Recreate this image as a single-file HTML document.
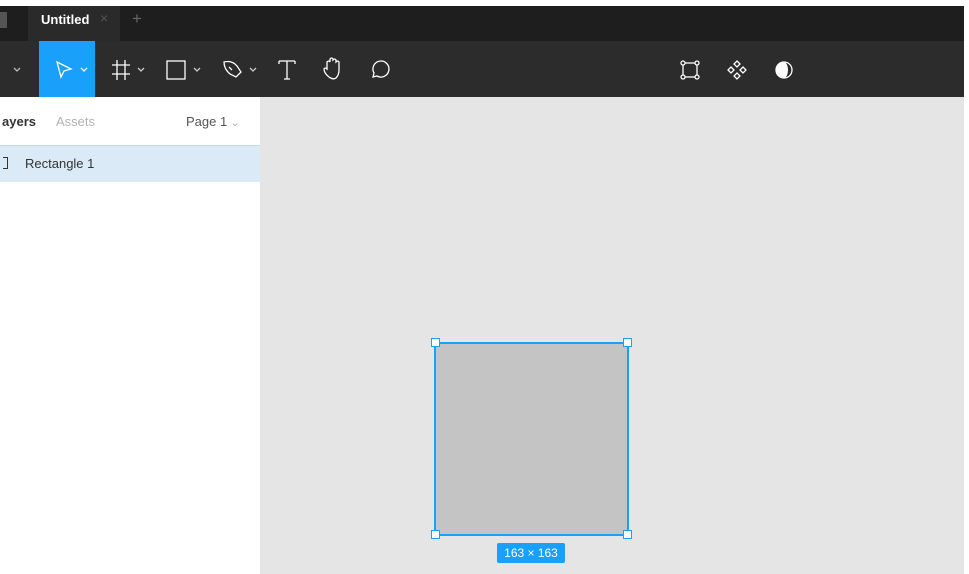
<!DOCTYPE html>
<html><head><style>
*{margin:0;padding:0;box-sizing:border-box}
body{width:969px;height:574px;background:#fff;position:relative;overflow:hidden;font-family:"Liberation Sans",sans-serif}
.abs{position:absolute}
svg{position:absolute;overflow:visible}
</style></head><body>
<div class="abs" style="left:0;top:6px;width:964px;height:35px;background:#1e1e1e"></div>
<div class="abs" style="left:0;top:12px;width:7px;height:16px;background:#555"></div>
<div class="abs" style="left:28px;top:6px;width:92px;height:35px;background:#2a2a2a"></div>
<div class="abs" style="left:41px;top:12px;color:#fff;font-size:13px;font-weight:bold">Untitled</div>
<div class="abs" style="left:100px;top:10px;color:#555;font-size:14px">×</div>
<div class="abs" style="left:132px;top:9px;color:#666;font-size:17px">+</div>
<div class="abs" style="left:0;top:41px;width:964px;height:56px;background:#2c2c2c"></div>
<div class="abs" style="left:39px;top:41px;width:56px;height:56px;background:#18a0fb"></div>
<svg width="969" height="574" style="left:0;top:0" fill="none" stroke="#fff" stroke-width="1.3">
<path d="M14 68l3 3 3-3" stroke="#bbb"/>
<path d="M57 62l14 7-7 2-3 6z"/>
<path d="M81 68l3 3 3-3"/>
<path d="M117 60v20M125 60v20M112 65h18M112 74h18"/>
<path d="M138 68l3 3 3-3" stroke="#ccc"/>
<rect x="167" y="61" width="18" height="18"/>
<path d="M194 68l3 3 3-3" stroke="#ccc"/>
<path d="M224 62q8-2 13 4l4 6-5 5-6-3q-6-5-6-12zM229 67l3 3"/>
<path d="M250 68l3 3 3-3" stroke="#ccc"/>
<path d="M279 61h16M287 61v18M284 79h6M279 61v3M295 61v3"/>
<path d="M329 77q-5-4-5-8q1-2 3 0v-7q2-2 3 0v-3q2-2 3 0v1q2-2 3 0v2q2-2 3 0v8q0 5-3 8q-3 2-7-1z"/>
<path d="M373 77l1-4a8 8 0 1 1 3 3z"/>
<rect x="683" y="63" width="14" height="14"/>
<circle cx="683" cy="63" r="2" fill="#2c2c2c"/><circle cx="697" cy="63" r="2" fill="#2c2c2c"/><circle cx="683" cy="77" r="2" fill="#2c2c2c"/><circle cx="697" cy="77" r="2" fill="#2c2c2c"/>
<path d="M737 61l3 3-3 3-3-3zM737 73l3 3-3 3-3-3zM731 67l3 3-3 3-3-3zM743 67l3 3-3 3-3-3z"/>
<circle cx="784" cy="70" r="8"/><path d="M784 62a8 8 0 0 0 0 16a4 8 0 0 0 0-16z" fill="#fff" stroke="none"/>
</svg>
<div class="abs" style="left:0;top:97px;width:260px;height:477px;background:#fff"></div>
<div class="abs" style="left:260px;top:97px;width:704px;height:477px;background:#e5e5e5"></div>
<div class="abs" style="left:2px;top:114px;font-size:13px;color:#333;font-weight:bold">ayers</div>
<div class="abs" style="left:56px;top:114px;font-size:13px;color:#b3b3b3">Assets</div>
<div class="abs" style="left:186px;top:114px;font-size:13px;color:#555">Page 1 <span style="color:#aaa;font-size:10px">⌄</span></div>
<div class="abs" style="left:0;top:145px;width:260px;height:37px;background:#daebf7;border-top:1px solid #c5dcee"></div>
<div class="abs" style="left:3px;top:157px;width:5px;height:12px;border:1.3px solid #333;border-left:none"></div>
<div class="abs" style="left:25px;top:156px;font-size:13px;color:#333">Rectangle 1</div>
<div class="abs" style="left:434px;top:342px;width:195px;height:194px;background:#c4c4c4;border:2px solid #18a0fb"></div>
<div class="abs" style="left:431px;top:338px;width:9px;height:9px;background:#fff;border:1px solid #18a0fb"></div>
<div class="abs" style="left:623px;top:338px;width:9px;height:9px;background:#fff;border:1px solid #18a0fb"></div>
<div class="abs" style="left:431px;top:530px;width:9px;height:9px;background:#fff;border:1px solid #18a0fb"></div>
<div class="abs" style="left:623px;top:530px;width:9px;height:9px;background:#fff;border:1px solid #18a0fb"></div>
<div class="abs" style="left:497px;top:543px;width:68px;height:20px;background:#18a0fb;border-radius:2px;color:#fff;font-size:12px;text-align:center;line-height:20px">163 × 163</div>
</body></html>
